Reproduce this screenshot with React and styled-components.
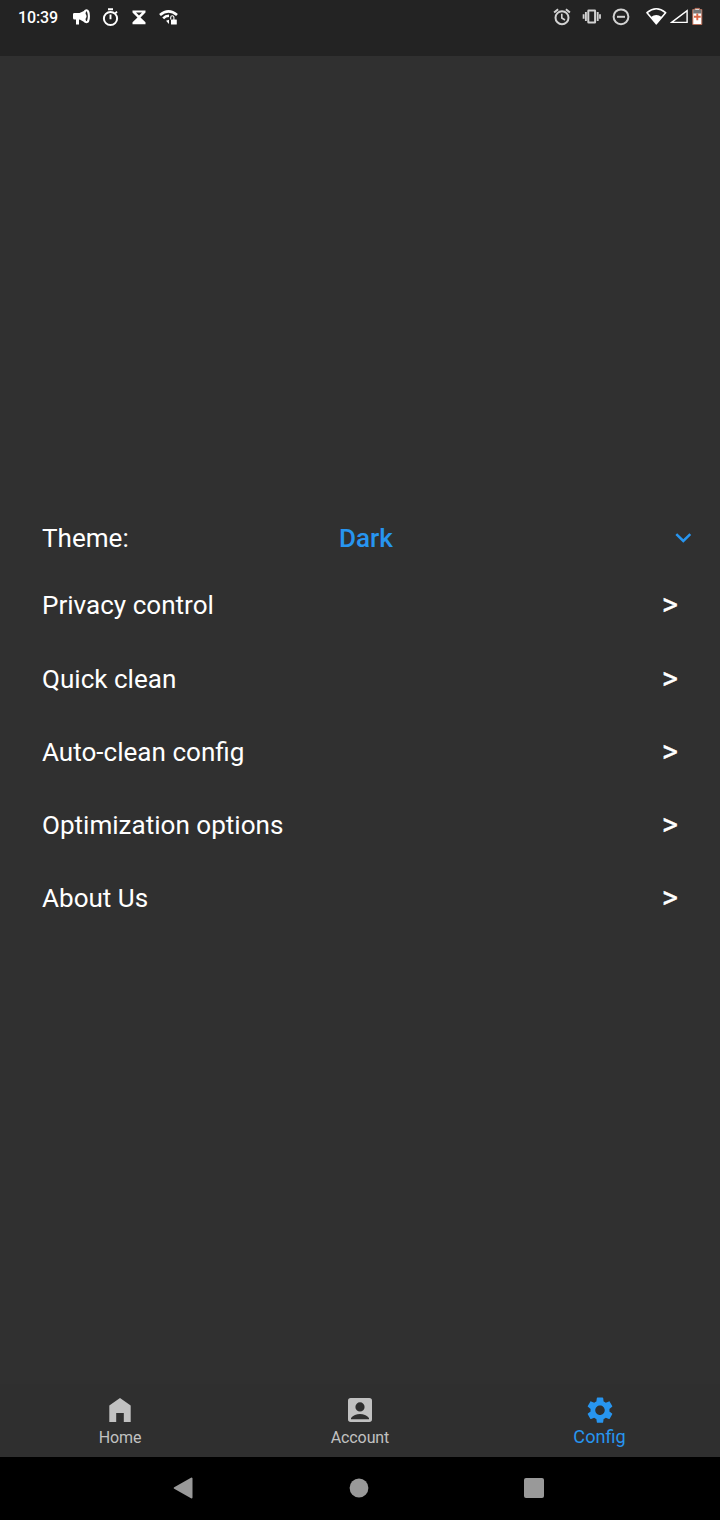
import React from 'react';
import styled, { createGlobalStyle } from 'styled-components';

const GlobalStyle = createGlobalStyle`
  * { box-sizing: border-box; }
  body {
    margin: 0;
    background: #303030;
    font-family: Roboto, "Noto Sans", sans-serif;
  }
`;

const Screen = styled.div`
  display: flex;
  flex-direction: column;
  width: 720px;
  height: 1520px;
  overflow: hidden;
  background: #303030;
`;

const StatusBar = styled.header`
  display: flex;
  flex: none;
  justify-content: space-between;
  height: 56px;
  padding: 7px 17.5px 0 18px;
  background: #232323;
`;

const StatusGroup = styled.div`
  display: flex;
  height: 20px;
`;

const Clock = styled.time`
  width: 40px;
  color: #fff;
  font-size: 16px;
  font-weight: 500;
  letter-spacing: -0.1px;
  line-height: 21px;
  white-space: nowrap;
`;

const Glyph = styled.svg`
  display: block;
  flex: none;
  width: ${(p) => p.$w}px;
  height: ${(p) => p.$h || 20}px;
  margin-left: ${(p) => p.$gap || 0}px;
`;

const Settings = styled.main`
  display: flex;
  flex: 1;
  flex-direction: column;
  justify-content: center;
  padding: 1.6px 42px 0;
`;

const Row = styled.div`
  display: flex;
  flex: none;
  align-items: center;
  justify-content: space-between;
  height: 73.2px;
  color: #fff;
  font-size: 26.07px;
  line-height: 30px;
`;

const ThemeRow = styled(Row)`
  display: grid;
  grid-template-columns: 297px 1fr auto;
  height: 62px;
  margin-right: -16px;
`;

const Label = styled.span`
  white-space: nowrap;
`;

const Selected = styled.span`
  color: #2795f0;
  font-weight: 500;
`;

const More = styled.span`
  margin-right: 0;
  font-size: 31px;
  font-weight: 400;
  -webkit-text-stroke: 0.3px #fff;
`;

const TabBar = styled.nav`
  display: flex;
  flex: none;
  height: 73px;
  background: #2f2f2f;
`;

const Tab = styled.div`
  display: flex;
  flex: 1;
  flex-direction: column;
  align-items: center;
  padding-top: 12px;
  color: ${(p) => (p.$active ? '#2795f0' : '#c1c1c1')};
`;

const TabLabel = styled.span`
  height: 20px;
  font-size: ${(p) => (p.$active ? 18.1 : 16)}px;
  line-height: ${(p) => (p.$active ? 21 : 24)}px;
  margin-top: 2px;
  margin-right: ${(p) => (p.$active ? 1 : 0)}px;
  letter-spacing: ${(p) => (p.$active ? 0 : -0.1)}px;
`;

const SystemNav = styled.footer`
  display: flex;
  flex: none;
  align-items: center;
  height: 63px;
  padding: 0 0 1px 172px;
  background: #000;
`;

const TAB_PATHS = {
  Home: 'M14 2 L3.3 9.5 V26 H10.2 V17 H17.8 V26 H24.7 V9.5 Z',
  Account:
    'M4.7 2 H23.3 Q26 2 26 4.7 V23.3 Q26 26 23.3 26 H4.7 Q2 26 2 23.3 V4.7 Q2 2 4.7 2 Z M14 6.3 a4.6 4.6 0 1 0 0 9.2 a4.6 4.6 0 0 0 0-9.2 Z M5 23.3 H23 V22 C21 19.3 17.4 18 14 18 S7 19.3 5 22 Z',
};

const GEAR =
  'M19.14 12.94c.04-.3.06-.61.06-.94s-.02-.64-.07-.94l2.03-1.58c.18-.14.23-.41.12-.61l-1.92-3.32c-.12-.22-.37-.29-.59-.22l-2.39.96c-.5-.38-1.03-.7-1.62-.94L14.4 2.81c-.04-.24-.24-.41-.48-.41h-3.84c-.24 0-.43.17-.47.41l-.36 2.54c-.59.24-1.13.57-1.62.94l-2.39-.96c-.22-.08-.47 0-.59.22L2.74 8.87c-.12.21-.08.47.12.61l2.03 1.58c-.05.3-.09.63-.09.94s.02.64.07.94l-2.03 1.58c-.18.14-.23.41-.12.61l1.92 3.32c.12.22.37.29.59.22l2.39-.96c.5.38 1.03.7 1.62.94l.36 2.54c.05.24.24.41.48.41h3.84c.24 0 .44-.17.47-.41l.36-2.54c.59-.24 1.13-.56 1.62-.94l2.39.96c.22.08.47 0 .59-.22l1.92-3.32c.12-.22.07-.47-.12-.61l-2.01-1.58zM12 15.6c-1.98 0-3.6-1.62-3.6-3.6s1.62-3.6 3.6-3.6 3.6 1.62 3.6 3.6-1.62 3.6-3.6 3.6z';

function LeftStatus() {
  return (
    <StatusGroup>
      <Clock>10:39</Clock>
      <Glyph $w={18} $gap={15} viewBox="0 0 18 20">
        <path d="M0 7.2 Q0 6 1.4 6 H6.5 L12 3.4 V15.4 L6.7 12.6 L6 12.8 V17.5 H3 V12.6 H1.5 Q0 12.6 0 11 Z" fill="#fff" />
        <ellipse cx="13.5" cy="9.3" rx="2.4" ry="6" fill="#232323" stroke="#fff" strokeWidth="2.1" />
        <path d="M12 6.3 Q15.2 9.3 12 12.3 Z" fill="#fff" />
      </Glyph>
      <Glyph $w={17} $gap={11} viewBox="0 0 17 20" fill="none" stroke="#fff">
        <circle cx="8.5" cy="11.5" r="6.6" strokeWidth="2" />
        <path d="M6 2.2 H11 M8.5 7.5 V12.2 M13.2 6.4 L15 4.6" strokeWidth="1.9" />
      </Glyph>
      <Glyph $w={14} $gap={13.3} viewBox="0 0 14 20">
        <path d="M.5 3.4 H13.5 V5.4 L8.5 10.4 L13.5 15.2 V17.3 H.5 V15.2 L5.5 10.4 L.5 5.4 Z" fill="#fff" />
        <path d="M4 5.5 H10 L7 8.5 Z" fill="#232323" />
      </Glyph>
      <Glyph $w={20} $gap={12.7} viewBox="0 0 20 20" fill="none" stroke="#fff">
        <path d="M1 8.1 Q9.5 .8 18 8.1" strokeWidth="2.7" />
        <path d="M4.2 11.4 Q6.4 8.9 10 8.8" strokeWidth="2.5" />
        <path d="M7 13.8 L10 12.7 V17 Z" fill="#fff" stroke="none" />
        <path d="M11.7 12.5 V10.6 Q11.7 8.8 13.3 8.8 T14.9 10.6 V13" strokeWidth="1.1" />
        <rect x="12" y="12.4" width="5.8" height="5.2" rx=".5" fill="#fff" stroke="none" />
      </Glyph>
    </StatusGroup>
  );
}

function RightStatus() {
  return (
    <StatusGroup>
      <Glyph $w={18} viewBox="0 0 18 20" fill="none" stroke="#d2d2d2">
        <circle cx="9" cy="10.7" r="6.5" strokeWidth="2" />
        <path d="M1.1 5.6 L5.1 2.3 M12.9 2.3 L16.9 5.6" strokeWidth="2" />
        <path d="M8.8 6.7 V11 L12 13" strokeWidth="1.6" />
      </Glyph>
      <Glyph $w={20} $gap={10.5} viewBox="0 0 20 20" fill="none" stroke="#d2d2d2">
        <rect x="6.3" y="3.6" width="6.8" height="12" rx=".3" strokeWidth="2" />
        <path d="M3.9 5 V14 M15.7 5 V14" strokeWidth="1.9" />
        <path d="M1.6 7.2 V11.8 M18 7.2 V11.8" strokeWidth="1.8" />
      </Glyph>
      <Glyph $w={18} $gap={10} viewBox="0 0 18 20" fill="none" stroke="#d2d2d2">
        <circle cx="9" cy="9.8" r="7.4" strokeWidth="2" />
        <path d="M5 9.8 H13" strokeWidth="2" />
      </Glyph>
      <Glyph $w={21} $gap={16.4} viewBox="0 0 21 20">
        <path d="M1 5.7 Q10.3 -2.2 19.6 5.7 L10.3 16.8 Z" fill="none" stroke="#fff" strokeWidth="1.6" strokeLinejoin="round" />
        <path d="M5 10 Q10.3 5.8 15.6 10 L10.3 17 Z" fill="#fff" />
      </Glyph>
      <Glyph $w={19} $gap={3} viewBox="0 0 19 20">
        <path d="M1.6 15.4 L17.1 3.6 V15.4 Z" fill="none" stroke="#fff" strokeWidth="1.4" />
      </Glyph>
      <Glyph $w={11} $gap={2.5} viewBox="0 0 11 20">
        <path d="M.8 2.5 H3 V1.4 H7.5 V2.5 H9.8 V17.5 H.8 Z" fill="#fff" stroke="#b86b55" strokeWidth="1" />
        <path d="M1.2 2.7 H9.4 V6.5 H1.2 Z" fill="#777" />
        <path d="M5.3 6.5 V13.3 M2 9.8 H8.7" stroke="#dc6746" strokeWidth="1.9" />
      </Glyph>
    </StatusGroup>
  );
}

function TabItem({ name, active }) {
  return (
    <Tab $active={active}>
      {active ? (
        <Glyph $w={28} $h={28} viewBox="0 0 24 24" fill="currentColor"><path transform="translate(-1.56 -1.4) scale(1.13)" d={GEAR} /></Glyph>
      ) : (
        <Glyph $w={28} $h={28} viewBox="0 0 28 28" fill="currentColor"><path fillRule="evenodd" d={TAB_PATHS[name]} /></Glyph>
      )}
      <TabLabel $active={active}>{name}</TabLabel>
    </Tab>
  );
}

const OPTIONS = ['Privacy control', 'Quick clean', 'Auto-clean config', 'Optimization options', 'About Us'];

export default function App() {
  return (
    <>
      <GlobalStyle />
      <Screen>
        <StatusBar>
          <LeftStatus />
          <RightStatus />
        </StatusBar>
        <Settings>
          <ThemeRow>
            <Label>Theme:</Label>
            <Selected>Dark</Selected>
            <Glyph $w={20} $h={12} viewBox="0 0 20 12">
              <path d="M2.3 2.2 L9.3 9 L16.3 2.2" fill="none" stroke="#2795f0" strokeWidth="2.5" />
            </Glyph>
          </ThemeRow>
          {OPTIONS.map((name) => (
            <Row key={name}>
              <Label>{name}</Label>
              <More>&gt;</More>
            </Row>
          ))}
        </Settings>
        <TabBar>
          <TabItem name="Home" />
          <TabItem name="Account" />
          <TabItem name="Config" active />
        </TabBar>
        <SystemNav>
          <Glyph $w={22} $h={24} viewBox="0 0 22 24" fill="#999">
            <path d="M2.7 12 L19.5 2.5 V21.5 Z" stroke="#999" strokeWidth="2" strokeLinejoin="round" />
          </Glyph>
          <Glyph $w={20} $h={20} $gap={155.4} viewBox="0 0 20 20" fill="#999">
            <circle cx="10" cy="10" r="9.4" />
          </Glyph>
          <Glyph $w={22} $h={22} $gap={154} viewBox="0 0 22 22" fill="#999">
            <rect x="1" y="1" width="20" height="20" rx="2" />
          </Glyph>
        </SystemNav>
      </Screen>
    </>
  );
}
